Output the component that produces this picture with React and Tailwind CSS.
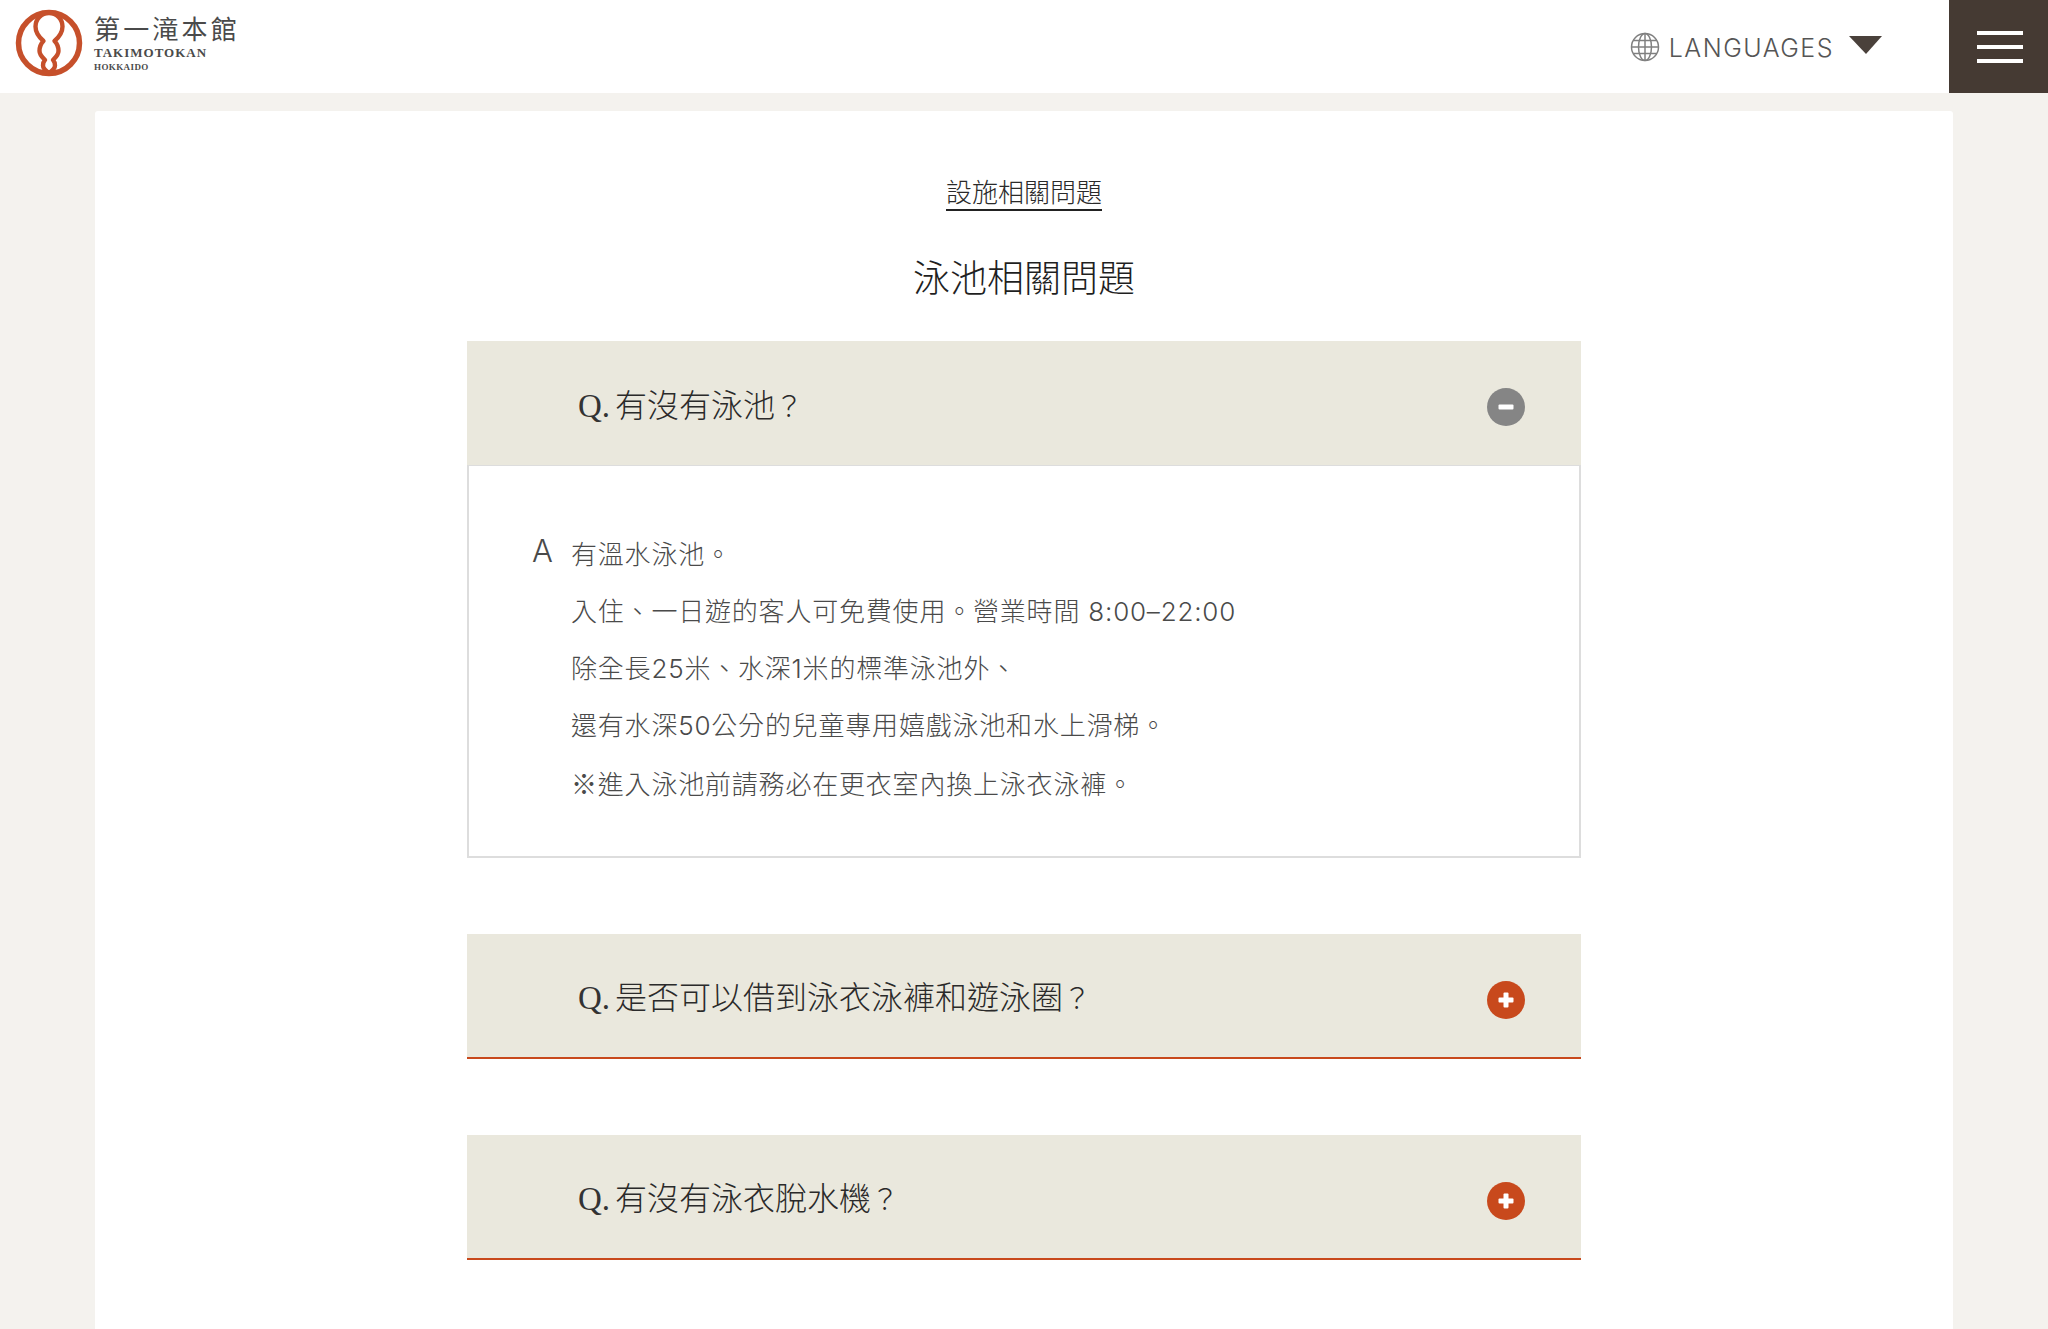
import React from "react";

const cjk = '"Noto Sans CJK TC", "Noto Sans CJK SC", sans-serif';

function Logo() {
  return (
    <svg width="68" height="68" viewBox="0 0 68 68" className="shrink-0">
      <circle cx="34" cy="34" r="30.5" fill="none" stroke="#c6502b" strokeWidth="5.5" />
      <path
        d="M34 4 C41.5 4 47.5 10 47.5 17.5 C47.5 24 43 29 39.5 32 C42.5 35 43.5 39 43.5 42 C43.5 46 40 49 38 51 C39.5 52.5 40 54 40 56.5 C40 60 37 62 34 64 C31 62 28 60 28 56.5 C28 54 28.5 52.5 30 51 C28 49 24.5 46 24.5 42 C24.5 39 25.5 35 28.5 32 C25 29 20.5 24 20.5 17.5 C20.5 10 26.5 4 34 4 Z"
        fill="#ffffff"
        stroke="#c6502b"
        strokeWidth="4.4"
        strokeLinejoin="round"
      />
    </svg>
  );
}

function Globe() {
  return (
    <svg width="30" height="30" viewBox="0 0 30 30" fill="none" stroke="#808080" strokeWidth="1.5">
      <circle cx="15" cy="15" r="13.5" />
      <ellipse cx="15" cy="15" rx="6.5" ry="13.5" />
      <path d="M15 1.5V28.5M3.2 8.5H26.8M1.5 15H28.5M3.2 21.5H26.8" />
    </svg>
  );
}

function RoundIcon({ open }) {
  return (
    <span className={`mt-[8px] flex h-[38px] w-[38px] items-center justify-center rounded-full ${open ? "bg-[#858585]" : "bg-[#c8491c]"}`}>
      <svg width="18" height="18" viewBox="0 0 18 18" fill="#ffffff">
        <rect x="1.5" y="6.5" width="15" height="5" rx="1" />
        {!open && <rect x="6.5" y="1.5" width="5" height="15" rx="1" />}
      </svg>
    </span>
  );
}

function Question({ text, open }) {
  return (
    <div className={`flex h-[125px] items-center justify-between bg-[#eae8dd] pl-[111px] pr-[56px] ${open ? "border-b border-[#dddddd]" : "border-b-2 border-[#c8491c]"}`}>
      <div className="flex items-baseline pt-[2px] text-[32px] leading-[44px] text-[#2a2a2a]" style={{ fontFamily: cjk, fontWeight: 300 }}>
        <span className="mr-[5px] text-[33px] text-[#333333] [font-family:'Liberation_Serif',serif]">Q.</span>
        <span>{text}</span>
        <span className="text-[28px]">？</span>
      </div>
      <RoundIcon open={open} />
    </div>
  );
}

const answer = [
  "有溫水泳池。",
  "入住、一日遊的客人可免費使用。營業時間 8:00–22:00",
  "除全長25米、水深1米的標準泳池外、",
  "還有水深50公分的兒童專用嬉戲泳池和水上滑梯。",
];

export default function App() {
  return (
    <div className="flex h-[1329px] flex-col overflow-hidden bg-[#f4f2ee]">
      <header className="flex h-[93px] shrink-0 items-center bg-white">
        <div className="mb-[7px] ml-[15px] flex items-center">
          <Logo />
          <div className="ml-[11px] flex flex-col text-[#4a4a4a]">
            <span className="text-[26px] leading-[28px] tracking-[3.2px] [font-family:'Noto_Sans_CJK_TC',sans-serif]">第一滝本館</span>
            <span className="mt-[3px] text-[13px] font-bold leading-[16px] tracking-[1px] [font-family:'Liberation_Serif',serif]">TAKIMOTOKAN</span>
            <span className="mt-[1px] text-[9px] font-bold leading-[10px] tracking-[0.4px] [font-family:'Liberation_Serif',serif]">HOKKAIDO</span>
          </div>
        </div>
        <div className="ml-auto flex items-center">
          <Globe />
          <span className="ml-[9px] mt-[2px] text-[25px] font-light leading-[30px] tracking-[1.5px] text-[#555555] [font-family:Inter,sans-serif]">LANGUAGES</span>
          <svg width="33" height="18" viewBox="0 0 33 18" className="mb-[3px] ml-[15px]">
            <path d="M0 0H33L17 18Z" fill="#4a413b" />
          </svg>
        </div>
        <div className="ml-[67px] flex h-[93px] w-[99px] flex-col items-center justify-center gap-[10px] bg-[#453a33] pl-[2px]">
          <span className="h-[4px] w-[46px] bg-white" />
          <span className="h-[4px] w-[46px] bg-white" />
          <span className="h-[4px] w-[46px] bg-white" />
        </div>
      </header>

      <main className="ml-[95px] mt-[18px] flex w-[1858px] flex-1 flex-col items-center rounded-t-[3px] bg-white">
        <div className="mt-[61px] border-b-2 border-[#222222] text-[26px] leading-[37px] text-[#2a2a2a]" style={{ fontFamily: cjk, fontWeight: 300 }}>
          設施相關問題
        </div>
        <h1 className="mt-[37px] text-[37px] leading-[56px] text-[#1f1f1f]" style={{ fontFamily: cjk, fontWeight: 300 }}>
          泳池相關問題
        </h1>
        <section className="mt-[37px] flex w-[1114px] flex-col">
          <Question text="有沒有泳池" open />
          <div className="flex h-[392px] border-x-2 border-b-2 border-[#dddddd] pl-[63px] pt-[60px]">
            <span className="mt-[3px] w-[39px] text-[31px] font-light leading-[44px] text-[#4a4a4a] [font-family:Inter,sans-serif]">A</span>
            <div className="flex flex-col text-[26px] leading-[57px] tracking-[0.8px] text-[#4a4a4a]" style={{ fontFamily: `Inter, ${cjk}`, fontWeight: 300 }}>
              {answer.map((l) => (
                <p key={l}>{l}</p>
              ))}
              <p>
                <span style={{ fontFamily: cjk }}>※</span>進入泳池前請務必在更衣室內換上泳衣泳褲。
              </p>
            </div>
          </div>
          <div className="mt-[76px]">
            <Question text="是否可以借到泳衣泳褲和遊泳圈" />
          </div>
          <div className="mt-[76px]">
            <Question text="有沒有泳衣脫水機" />
          </div>
        </section>
      </main>
    </div>
  );
}
